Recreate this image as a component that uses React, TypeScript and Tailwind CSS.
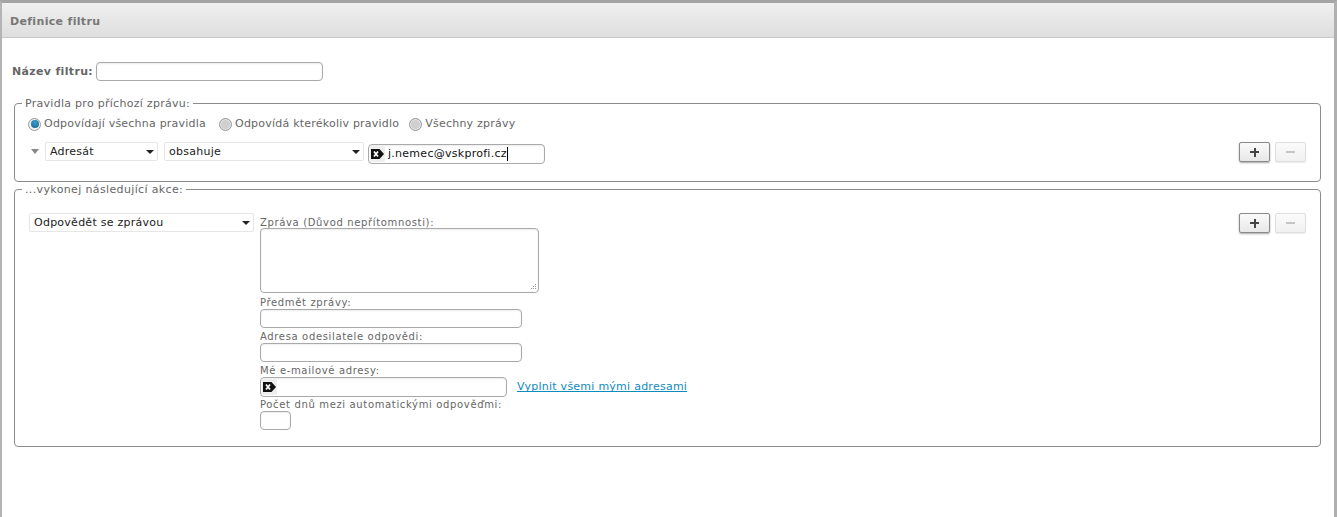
const font = "font-['DejaVu_Sans',Verdana,sans-serif]"

function Caret() {
  return <span className="w-0 h-0 border-x-[4px] border-x-transparent border-t-[4px] border-t-[#222]" />
}

function Select({ label, width }: { label: string; width: string }) {
  return (
    <div className={`${width} h-[19px] flex items-center justify-between pt-[2px] pl-[4px] pr-[3px] bg-white border border-[#e6e6e6] rounded-[2px] text-[11px] tracking-[0.25px] text-[#222]`}>
      <span>{label}</span>
      <span className="-mt-[1px] flex"><Caret /></span>
    </div>
  )
}

function TextBox({ width, height = "h-[19px]", children }: { width: string; height?: string; children?: React.ReactNode }) {
  return (
    <div className={`relative ${width} ${height} flex items-center shrink-0 bg-white border border-[#a9a9a9] rounded-[4px] shadow-[inset_0_1px_2px_rgba(0,0,0,0.08)]`}>
      {children}
    </div>
  )
}

function TagIcon() {
  return (
    <span className="h-[16px] w-[15px] ml-[1px] flex items-center justify-center bg-[#eeeeee] rounded-[2px] shrink-0">
      <svg width="13" height="10" viewBox="0 0 13 10">
        <path d="M0 0H8.5L13 5L8.5 10H0Z" fill="#111" />
        <path d="M3 2.4L7 7.6M7 2.4L3 7.6" stroke="#fff" strokeWidth="1.7" />
      </svg>
    </span>
  )
}

function Radio({ checked, label, className }: { checked?: boolean; label: string; className?: string }) {
  return (
    <label className={`flex items-center gap-[3px] ${className ?? ""}`}>
      <span className={`w-[13px] h-[13px] rounded-full border border-[#999] flex items-center justify-center ${checked ? "bg-[#f0f0f0]" : "bg-[#cfcfcf] shadow-[inset_0_0_0_1px_#e6e6e6]"}`}>
        {checked ? <span className="w-[8px] h-[8px] rounded-full bg-[radial-gradient(circle_at_50%_35%,#3f9fd0,#0e5f8a)]" /> : null}
      </span>
      <span>{label}</span>
    </label>
  )
}

function PlusMinus({ className }: { className?: string }) {
  return (
    <div className={`flex gap-[5px] ml-auto mr-[14px] ${className ?? ""}`}>
      <div className="relative w-[31px] h-[20px] rounded-[2px] bg-gradient-to-b from-[#fafafa] to-[#e8e8e8] border border-[#8a8a8a] shadow-[0_1px_2px_rgba(0,0,0,0.35)]">
        <span className="absolute left-[10px] top-[8px] w-[9px] h-[2px] bg-[#444]" />
        <span className="absolute left-[13.5px] top-[4.5px] w-[2px] h-[9px] bg-[#444]" />
      </div>
      <div className="relative w-[31px] h-[20px] rounded-[2px] bg-gradient-to-b from-[#fbfbfb] to-[#f1f1f1] border border-[#dedede] shadow-[0_1px_1px_rgba(0,0,0,0.08)]">
        <span className="absolute left-[10px] top-[8px] w-[9px] h-[2px] bg-[#c4c4c4]" />
      </div>
    </div>
  )
}

function FieldLabel({ children }: { children: React.ReactNode }) {
  return <div className="h-[14px] text-[10px] leading-[16px] tracking-[0.65px] text-[#666]">{children}</div>
}

export default function App() {
  return (
    <div className={`${font} w-[1337px] h-[517px] overflow-hidden bg-white border-t-[3px] border-t-[#a4a4a4] border-l-2 border-l-[#b4b4b4] border-r-[3px] border-r-[#b0b0b0] text-[#666]`}>
      <div className="h-[35px] flex items-center pl-[8px] pt-[5px] bg-gradient-to-b from-[#f0f0f0] to-[#dedede] border-b border-[#c8c8c8] text-[11px] font-bold tracking-[0.33px] text-[#777]">
        Definice filtru
      </div>

      <div className="flex items-center gap-[3px] mt-[24px] ml-[10px] text-[11px] font-bold tracking-[0.33px] text-[#666]">
        <span className="pt-[1px]">Název filtru:</span>
        <TextBox width="w-[227px]" />
      </div>

      <fieldset className="mt-[16px] ml-[12px] w-[1307px] h-[85px] border border-[#8c8c8c] rounded-[4px] pl-[13px]">
        <legend className="ml-[-6px] px-[3px] text-[11px] leading-[13px] tracking-[0.28px] text-[#666]">Pravidla pro příchozí zprávu:</legend>
        <div className="flex mt-[7px] text-[11px] leading-[14px] tracking-[0.22px] text-[#666]">
          <Radio checked label="Odpovídají všechna pravidla" />
          <Radio className="ml-[13px]" label="Odpovídá kterékoliv pravidlo" />
          <Radio className="ml-[10px]" label="Všechny zprávy" />
        </div>
        <div className="flex items-start mt-[11px]">
          <span className="mt-[7px] ml-[3px] mr-[6px] w-0 h-0 border-x-[4px] border-x-transparent border-t-[5px] border-t-[#888]" />
          <Select label="Adresát" width="w-[113px]" />
          <div className="w-[6px]" />
          <Select label="obsahuje" width="w-[200px]" />
          <div className="w-[4px]" />
          <div className="mt-[2px]">
            <TextBox width="w-[177px]" height="h-[20px]">
              <TagIcon />
              <span className="ml-[3px] pt-[1px] text-[11px] tracking-[0.27px] text-[#111]">j.nemec@vskprofi.cz</span>
              <span className="w-px h-[14px] bg-black" />
            </TextBox>
          </div>
          <PlusMinus />
        </div>
      </fieldset>

      <fieldset className="mt-[1px] ml-[12px] w-[1307px] h-[264px] border border-[#8c8c8c] rounded-[4px] pl-[14px]">
        <legend className="ml-[-7px] px-[3px] text-[11px] leading-[13px] tracking-[0.36px] text-[#666]">...vykonej následující akce:</legend>
        <div className="flex items-start mt-[17px]">
          <Select label="Odpovědět se zprávou" width="w-[225px]" />
          <div className="ml-[6px] mt-[2px] flex flex-col">
            <FieldLabel>Zpráva (Důvod nepřítomnosti):</FieldLabel>
            <div className="-mt-[1px]">
              <TextBox width="w-[279px]" height="h-[65px]">
                <svg className="absolute right-[1px] bottom-[1px]" width="8" height="8" viewBox="0 0 8 8">
                  <path d="M6 1h1v1H6zM4 3h1v1H4zM6 3h1v1H6zM2 5h1v1H2zM4 5h1v1H4zM6 5h1v1H6z" fill="#999" />
                </svg>
              </TextBox>
            </div>
            <div className="h-[2px]" />
            <FieldLabel>Předmět zprávy:</FieldLabel>
            <TextBox width="w-[262px]" />
            <div className="h-[1px]" />
            <FieldLabel>Adresa odesilatele odpovědi:</FieldLabel>
            <TextBox width="w-[262px]" />
            <div className="h-[1px]" />
            <FieldLabel>Mé e-mailové adresy:</FieldLabel>
            <div className="flex items-center gap-[10px]">
              <TextBox width="w-[247px]" height="h-[20px]">
                <TagIcon />
              </TextBox>
              <a className="text-[11px] tracking-[0.25px] text-[#0f8bbd] underline [text-decoration-skip-ink:none] whitespace-nowrap">Vyplnit všemi mými adresami</a>
            </div>
            <FieldLabel>Počet dnů mezi automatickými odpověďmi:</FieldLabel>
            <TextBox width="w-[31px]" />
          </div>
          <PlusMinus />
        </div>
      </fieldset>
    </div>
  )
}
